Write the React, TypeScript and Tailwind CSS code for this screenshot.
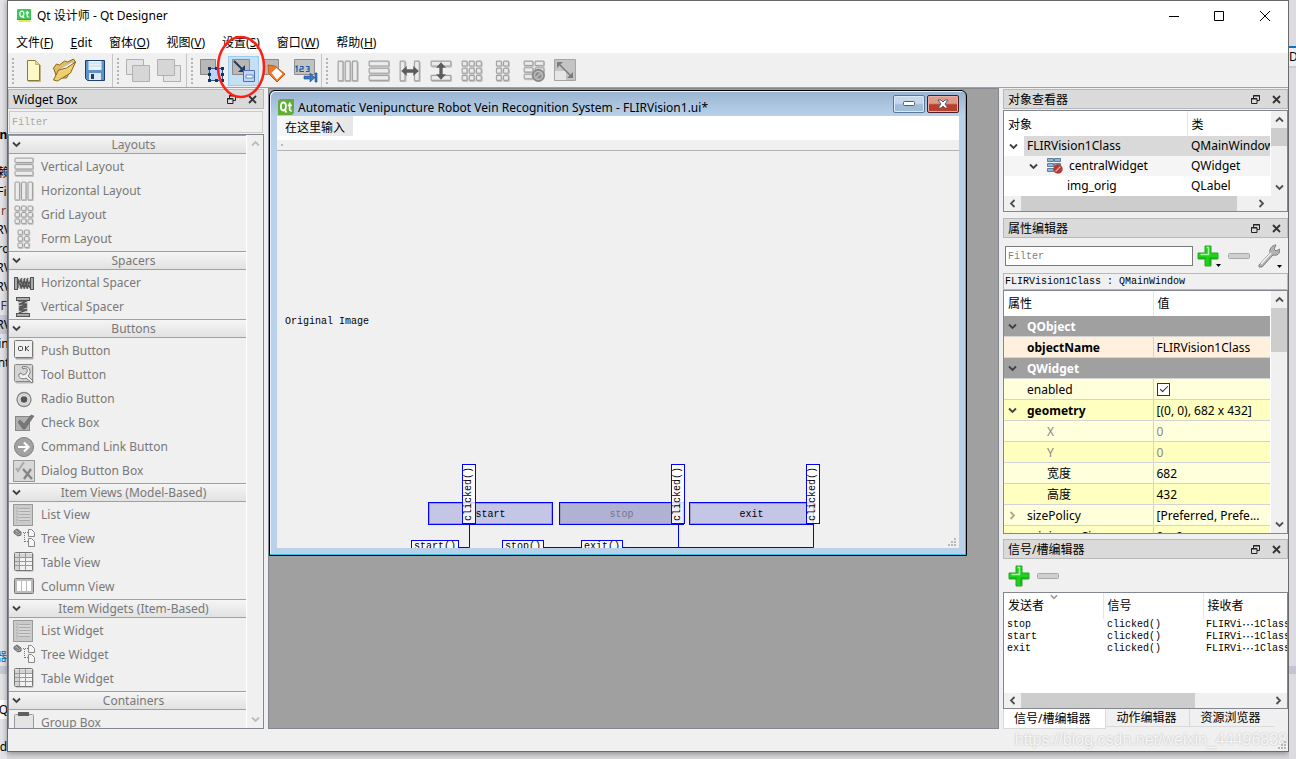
import React from 'react';
import { clsx } from 'clsx';

const UI = "font-['Noto_Sans','Noto_Sans_CJK_SC',sans-serif]";
const MONO = "font-['Liberation_Mono','Noto_Sans_CJK_SC',monospace]";

/* ---------- icons ---------- */

const rects: Record<string, number[][]> = {
  vertical: [[1, 1, 18, 4.5], [1, 7.5, 18, 4.5], [1, 14, 18, 4.5]],
  horizontal: [[1, 1, 4.5, 18], [7.5, 1, 4.5, 18], [14, 1, 4.5, 18]],
  grid: [1, 7.5, 14].flatMap((y) => [1, 7.5, 14].map((x) => [x, y, 4.5, 4.5])),
  form: [1, 7.5, 14].flatMap((y) => [4, 10.5].map((x) => [x, y, 4.5, 4.5])),
  hsplit: [[1, 1, 4.5, 18], [14, 1, 4.5, 18]],
  vsplit: [[1, 1, 18, 4.5], [1, 14, 18, 4.5]],
  broken: [[1, 1, 8, 4], [11, 1, 8, 4], [1, 7, 8, 4], [11, 7, 8, 4], [1, 13, 8, 4]],
};

const LayoutIcon = ({ kind, size = 20 }: { kind: string; size?: number }) => (
  <svg width={size} height={size} viewBox="0 0 20 20">
    {rects[kind].map(([x, y, w, h], i) => (
      <g key={i}>
        <rect x={x + 0.6} y={y + 0.8} width={w} height={h} rx="1" fill="none" stroke="#c4c4c4" strokeWidth="1.4" />
        <rect x={x} y={y} width={w} height={h} rx="0.8" fill="#dedede" stroke="#a2a2a2" />
        <rect x={x + 1} y={y + 1} width={w - 2} height={h - 2} fill="#ececec" />
      </g>
    ))}
    {kind === 'hsplit' && <path d="M2 10l5-4.500v3h6v-3l5 4.500-5 4.500v-3H7v3z" fill="#5c5c5c" />}
    {kind === 'vsplit' && <path d="M10 2l4.500 5h-3v6h3L10 18l-4.500-5h3V7h-3z" fill="#5c5c5c" />}
    {kind === 'broken' && (
      <g>
        <circle cx="14" cy="14" r="6" fill="#8a8a8a" />
        <circle cx="14" cy="14" r="3.600" fill="none" stroke="#bdbdbd" strokeWidth="1.400" />
        <path d="M11.600 16.400l4.800-4.800" stroke="#bdbdbd" strokeWidth="1.400" />
      </g>
    )}
  </svg>
);

const ItemIcon = ({ kind }: { kind: string }) => {
  if (rects[kind]) return <LayoutIcon kind={kind} />;
  return (
    <svg width="22" height="22" viewBox="0 0 22 22" fill="none">
      {kind === 'hspacer' && (
        <g stroke="#555">
          <path d="M4 6h14v11H4z" fill="#d4d4d4" stroke="none" />
          <path d="M5 16V7l3 9V7l3 9V7l3 9V7l3 9M5 12l4-6M8 17l4-11M11 17l4-11M14 17l4-10" strokeWidth="1.200" />
          <rect x="1.500" y="5.500" width="3" height="12" fill="#aaa" />
          <rect x="17.500" y="5.500" width="3" height="12" fill="#aaa" />
        </g>
      )}
      {kind === 'vspacer' && (
        <g stroke="#555">
          <path d="M5 5h10v12H5z" fill="#d4d4d4" stroke="none" />
          <path d="M5 5h9L6 8h8l-8 3h8l-8 3h8l-8 3M14 5l-8 4M14 9l-8 4M14 13l-8 4" strokeWidth="1.300" />
          <rect x="3.500" y="1.500" width="13" height="3" fill="#aaa" />
          <rect x="3.500" y="17.500" width="13" height="3" fill="#aaa" />
        </g>
      )}
      {kind === 'push' && (
        <g>
          <rect x="2.500" y="1.500" width="18" height="18" rx="1" fill="#aaa" />
          <rect x="1.500" y=".500" width="18" height="17" rx="1" fill="#f0f0f0" stroke="#777" />
          <rect x="5.500" y="6.500" width="4" height="4" rx="1" stroke="#444" />
          <path d="M12.500 6v5M16 6l-3 2.500L16 11" stroke="#444" />
        </g>
      )}
      {kind === 'tool' && (
        <g>
          <rect x="2.500" y="1.500" width="18" height="18" rx="1" fill="#bbb" />
          <rect x="1.500" y=".500" width="18" height="17" rx="1" fill="#d4d4d4" stroke="#888" />
          <path d="M9 3c5-2 9 2 8 6l-2 3 5 5-1 2-6-5c-4 2-8 0-7-4l2-1c1 3 5 2 6-1s-1-5-4-3z" fill="#f4f4f4" stroke="#777" />
        </g>
      )}
      {kind === 'radio' && (
        <g>
          <circle cx="11" cy="11.500" r="7" fill="#e6e6e6" stroke="#858585" strokeWidth="1.300" />
          <circle cx="11" cy="11.500" r="5" stroke="#c8c8c8" />
          <circle cx="11" cy="11.500" r="3.300" fill="#555" />
        </g>
      )}
      {kind === 'check' && (
        <g>
          <rect x="2.500" y="4.500" width="14" height="14" fill="#b0b0b0" stroke="#888" />
          <path d="M5 10l2-2 4 4 7-9 3 1-9 13h-2z" fill="#777" stroke="#666" strokeWidth=".600" />
        </g>
      )}
      {kind === 'command' && (
        <g>
          <circle cx="11" cy="11" r="9.500" fill="#a2a2a2" stroke="#808080" />
          <path d="M5 11h10M11 6.500l4.500 4.500-4.500 4.500" stroke="#fff" strokeWidth="2.200" />
        </g>
      )}
      {kind === 'dialog' && (
        <g>
          <rect x=".500" y=".500" width="21" height="21" fill="#d8d8d8" stroke="#999" />
          <path d="M3 8l2 3 6-9" stroke="#aaa" strokeWidth="2" />
          <path d="M10 9l9 10M18 9l-7 10" stroke="#858585" strokeWidth="2.400" />
        </g>
      )}
      {kind === 'list' && (
        <g>
          <rect x=".500" y=".500" width="19" height="21" fill="#cacaca" stroke="#999" />
          <path d="M6 4.500h11M6 7.500h11M6 10.500h11M6 13.500h11M6 16.500h11" stroke="#aaa" />
          <path d="M6 6h11M6 9h11M6 12h11M6 15h11" stroke="#e0e0e0" />
          <path d="M4 3v16" stroke="#aaa" strokeDasharray="2 1" />
        </g>
      )}
      {kind === 'tree' && (
        <g>
          <path d="M1 3l3-2 4 3v3l-3 1-4-3z" fill="#a8a8a8" stroke="#666" />
          <path d="M2 4l4 2M4 2l3 3" stroke="#666" strokeWidth=".800" />
          <path d="M10 4.500h5M11.500 5v9M12 13.500h3" stroke="#777" strokeDasharray="1 1" />
          <path d="M15.500 1.500h3l3 3v4h-6zM15.500 10.500h3l3 3v5h-6z" fill="#f5f5f5" stroke="#888" />
        </g>
      )}
      {kind === 'table' && (
        <g>
          <rect x="2.500" y="1.500" width="18" height="18" rx="1" fill="#aaa" />
          <rect x="1.500" y=".500" width="18" height="18" rx="1" fill="#f2f2f2" stroke="#777" />
          <path d="M2 1.500h17v4H2zM2 6h4v12H2z" fill="#d4d4d4" />
          <path d="M2 5.500h17M2 9.500h17M2 13.500h17M6.500 1v17M12.500 1v17" stroke="#999" />
        </g>
      )}
      {kind === 'column' && (
        <g>
          <rect x="1.500" y="2.500" width="19" height="15" rx="1" fill="#bbb" stroke="#777" />
          <rect x="4" y="5" width="4" height="10" fill="#fff" />
          <rect x="9" y="5" width="4" height="10" fill="#fff" />
          <rect x="14" y="5" width="4" height="10" fill="#fff" />
        </g>
      )}
      {kind === 'group' && (
        <g>
          <rect x="1.500" y="2.500" width="19" height="20" rx="1" fill="#e4e4e4" stroke="#999" />
          <rect x="5" y="0" width="11" height="4" fill="#606060" />
        </g>
      )}
    </svg>
  );
};

const QtLogo = ({ flat }: { flat?: boolean }) => (
  <svg width="16" height="16" viewBox="0 0 16 16">
    {flat ? (
      <path d="M2 0h14v14l-2 2H0V2z" fill="#62ac37" />
    ) : (
      <g>
        <path d="M2 1h13v10H1V2z" fill="#3fc65a" />
        <path d="M1 11h14v1H1z" fill="#2aa845" />
        <path d="M3 12h11l1 2H2z" fill="#f0e25c" />
      </g>
    )}
    {flat ? (
      <g fill="none" stroke="#fff" strokeWidth="1.800">
        <ellipse cx="5.400" cy="7.500" rx="2.500" ry="4" />
        <path d="M6 10l2.500 3.500M11.700 3.500v7q0 1.500 2 1.200M9.800 6.300h4" />
      </g>
    ) : (
      <g fill="none" stroke="#fff" strokeWidth="1.200">
        <ellipse cx="5.800" cy="6" rx="2" ry="2.800" />
        <path d="M6 7.500l2.200 2.700M11.200 3v5q0 1 1.600.800M9.700 4.800h3.300" />
      </g>
    )}
  </svg>
);

const ToolIcon = ({ kind }: { kind: string }) => {
  if (rects[kind]) return <LayoutIcon kind={kind} size={22} />;
  return (
    <svg width="25" height="25" viewBox="0 0 25 25" fill="none">
      {kind === 'new' && (
        <g>
          <path d="M7 23.500h12.500V7" stroke="#bdb68a" />
          <path d="M6.500 2.500h8l4 4v16h-12z" fill="#fdf8c8" stroke="#8a7a35" />
          <path d="M14.500 2.500v4h4" fill="#e5d98c" stroke="#b8a85a" strokeWidth=".800" />
        </g>
      )}
      {kind === 'open' && (
        <g stroke="#8a6914">
          <path d="M1.500 10l3-4 3 1 5-4 3 1 6-3 2 3-9 16H5z" fill="#e0bd62" />
          <path d="M6 12L20 4l2 1-11 13z" fill="#fff" stroke="#bbb" />
          <path d="M1.500 22l5-10 8-2 9-6-5 11-13 8z" fill="#efcf72" />
        </g>
      )}
      {kind === 'save' && (
        <g>
          <path d="M2.500 2.500h19v20h-17l-2-2z" fill="#5d93c8" stroke="#1c3f73" />
          <path d="M5.500 3h13v9h-13z" fill="#e8f2fb" />
          <path d="M6 5h12M6 8h12" stroke="#c5d6e6" />
          <path d="M6 15h12v7H6z" fill="#dfe8f0" />
          <path d="M8 16h3v5H8z" fill="#1d3d66" />
        </g>
      )}
      {kind === 'back' && (
        <g fill="#d6d6d6" stroke="#b0b0b0">
          <path d="M.500 1.500h17v15H.500z" fill="#e4e4e4" />
          <path d="M6.500 7.500h17v16h-17z" />
        </g>
      )}
      {kind === 'front' && (
        <g fill="#d6d6d6" stroke="#b0b0b0">
          <path d="M6.500 7.500h17v16h-17z" fill="#e4e4e4" />
          <path d="M.500 1.500h17v16H.500z" />
        </g>
      )}
      {kind === 'widgets' && (
        <g>
          <path d="M.500 1.500h15v15H.500z" fill="#b8b8b8" stroke="#888" />
          <path d="M9.500 10.500h13v12h-13z" fill="#b9d5ff" stroke="#33548a" />
          <path d="M8 9h3v3H8zM15 9h3v3h-3zM21 9h3v3h-3zM8 15h3v3H8zM21 15h3v3h-3zM8 21h3v3H8zM15 21h3v3h-3zM21 21h3v3h-3z" fill="#12355e" />
        </g>
      )}
      {kind === 'signals' && (
        <g>
          <path d="M1.500 1.500h17v15h-17z" fill="#b8b8b8" stroke="#8b8b8b" />
          <path d="M3 3l8 8" stroke="#203c5e" strokeWidth="2" />
          <path d="M14 14H7l7-7z" fill="#203c5e" />
          <path d="M12.500 12.500h11v11h-11z" fill="#bcd6ff" stroke="#5072a7" />
          <path d="M15 17h7v3h-7z" fill="#fff" stroke="#5072a7" strokeWidth=".800" />
        </g>
      )}
      {kind === 'buddies' && (
        <g>
          <path d="M1.500 1.500h15v15h-15z" fill="#b8b8b8" stroke="#8b8b8b" />
          <path d="M6 7l7 1 10 8-8 8-8-8z" fill="#f07a2c" stroke="#c45a16" />
          <path d="M9.500 15l5-5 6 6-5.500 5.500z" fill="#fff" />
        </g>
      )}
      {kind === 'taborder' && (
        <g>
          <path d="M1.500 1.500h20v15h-20z" fill="#c2c2c2" stroke="#909090" />
          <path d="M2.500 9l1.500-1v6M7 8.500h3v2.500H7v2.500h4M13 8.500h3v5h-3M14 11h2" stroke="#1d56a5" strokeWidth="1.200" />
          <path d="M11 18h6v-3l5 4.500-5 4.500v-3h-6zM22 15h2v9h-2z" fill="#3b78c4" stroke="#1b4a8c" strokeWidth=".600" />
        </g>
      )}
      {kind === 'adjust' && (
        <g>
          <path d="M2.500 1.500h21v21h-21z" fill="#c4c4c4" stroke="#a4a4a4" />
          <path d="M3 13h11v9H3z" fill="#e6e6e6" />
          <path d="M8 7l11 11" stroke="#7c7c7c" strokeWidth="1.500" />
          <path d="M5 4h6l-6 6zM21 20h-6l6-6z" fill="#7c7c7c" />
        </g>
      )}
    </svg>
  );
};

const Chevron = ({ dir = 'down', color = '#404040', size = 9 }: { dir?: string; color?: string; size?: number }) => {
  const paths: Record<string, string> = {
    down: 'M1 2.500l3.500 3.500 3.500-3.500',
    up: 'M1 6.500l3.500-3.500 3.500 3.500',
    left: 'M6.500 1L3 4.500l3.500 3.500',
    right: 'M2.500 1l3.500 3.500-3.500 3.500',
  };
  return (
    <svg width={size} height={size} viewBox="0 0 9 9" fill="none" className="shrink-0">
      <path d={paths[dir]} stroke={color} strokeWidth="1.800" />
    </svg>
  );
};

const Plus = () => (
  <svg width="22" height="22" viewBox="0 0 22 22">
    <path d="M8 1h6v7h7v6h-7v7H8v-7H1V8h7z" fill="#1fd01c" stroke="#2aa426" />
    <path d="M9.500 2.500h2v7h-8" fill="none" stroke="#a5f5a2" strokeWidth="1.500" />
    <path d="M9 13h-7M13 19.500V13h7" fill="none" stroke="#12a310" />
  </svg>
);

const Minus = () => (
  <svg width="22" height="22" viewBox="0 0 22 22">
    <rect x=".500" y="8.500" width="21" height="5" rx="1" fill="#cfcfcf" stroke="#a8a8a8" />
  </svg>
);

const DropArrow = () => (
  <svg width="5" height="3" viewBox="0 0 5 3" className="-ml-[3px] self-end"><path d="M0 0h5L2.500 3z" fill="#000" /></svg>
);

/* ---------- shared parts ---------- */

const DockTitle = ({ title }: { title: string }) => (
  <div className="flex h-5 shrink-0 items-center border border-[#b8b8b8] bg-[#dadada] pl-1 pr-[6px]">
    <h2 className="flex-1 pt-px leading-4">{title}</h2>
    <button aria-label="Float" className="mr-3">
      <svg width="9" height="9" viewBox="0 0 9 9" fill="none" stroke="#222"><path d="M2.500 3V.500h6v5H6M2 1h7" /><path d="M.500 3.500H6v5H.500zM0 4h6" /></svg>
    </button>
    <button aria-label="Close">
      <svg width="9" height="9" viewBox="0 0 9 9" stroke="#333" strokeWidth="1.800"><path d="M1 1l7 7M8 1L1 8" /></svg>
    </button>
  </div>
);

const VScroll = ({ thumb, faded }: { thumb?: string; faded?: boolean }) => (
  <div className="flex w-[17px] shrink-0 flex-col items-center border-l border-white bg-[#f0f0f0]">
    <div className="flex h-[17px] shrink-0 items-center"><Chevron dir="up" color={faded ? '#bdbdbd' : '#505050'} /></div>
    <div className="w-full flex-1">{thumb && <div className={clsx('w-full bg-[#cdcdcd]', thumb)} />}</div>
    <div className="flex h-[17px] shrink-0 items-center"><Chevron color={faded ? '#bdbdbd' : '#505050'} /></div>
  </div>
);

const HScroll = ({ thumb }: { thumb: string }) => (
  <div className="flex h-[15px] flex-1 items-center bg-[#f0f0f0]">
    <div className="flex w-[17px] justify-center"><Chevron dir="left" color="#505050" /></div>
    <div className="h-full flex-1"><div className={clsx('h-full bg-[#cdcdcd]', thumb)} /></div>
    <div className="flex w-[17px] justify-center"><Chevron dir="right" color="#505050" /></div>
  </div>
);

/* ---------- top area ---------- */

const menus = [['文件', 'F'], ['', 'Edit'], ['窗体', 'O'], ['视图', 'V'], ['设置', 'S'], ['窗口', 'W'], ['帮助', 'H']];

const TitleBar = () => (
  <header className="flex h-[30px] shrink-0 items-center bg-white pl-2">
    <QtLogo />
    <h1 className="ml-[5px] flex-1">Qt 设计师 - Qt Designer</h1>
    <button aria-label="Minimize" className="flex w-[45px] justify-center">
      <svg width="10" height="10" stroke="#000"><path d="M0 5.500h10" /></svg>
    </button>
    <button aria-label="Maximize" className="flex w-[46px] justify-center">
      <svg width="10" height="10" fill="none" stroke="#000"><path d="M.500.500h9v9h-9z" /></svg>
    </button>
    <button aria-label="Close window" className="flex w-[46px] justify-center">
      <svg width="10" height="10" stroke="#000"><path d="M0 0l10 10M10 0L0 10" /></svg>
    </button>
  </header>
);

const MenuBar = () => (
  <nav className="flex h-[23px] shrink-0 items-center border-b border-[#f0f0f0] bg-white pt-px">
    {menus.map(([name, key]) => (
      <button key={key} className="pl-2 pr-[9px] leading-4">
        {name ? <>{name}(<u>{key}</u>)</> : <><u>E</u>dit</>}
      </button>
    ))}
  </nav>
);

const toolGroups = [
  ['new', 'open', 'save'],
  ['back', 'front'],
  ['widgets', 'signals', 'buddies', 'taborder'],
  ['horizontal', 'vertical', 'hsplit', 'vsplit', 'grid', 'form', 'broken', 'adjust'],
];

const ToolBar = () => (
  <div className="flex h-[34px] shrink-0 items-center border-b border-[#a0a0a0] bg-[#f0f0f0]">
    {toolGroups.map((group, i) => (
      <React.Fragment key={i}>
        {i > 0 && <div className={clsx('h-full w-px bg-[#c4c4c4]', i < 3 && 'ml-px')} />}
        <div className="flex w-[10px] justify-center">
          <div className="h-[26px] w-0 border-l-2 border-dotted border-[#b4b4b4]" />
        </div>
        {group.map((kind) => (
          <button
            key={kind}
            aria-label={kind}
            className={clsx(
              'relative flex h-[30px] w-[31px] items-center justify-center',
              kind === 'signals' && 'border border-[#99cdf2] bg-[#c5e0f5]'
            )}
          >
            <ToolIcon kind={kind} />
            {kind === 'signals' && (
              <svg className="absolute -left-[13px] -top-[23px] z-10 max-w-none" width="50" height="68" fill="none">
                <ellipse cx="25" cy="33" rx="23" ry="30" stroke="#fb1f16" strokeWidth="2.500" />
              </svg>
            )}
          </button>
        ))}
      </React.Fragment>
    ))}
  </div>
);

/* ---------- widget box ---------- */

const categories: { name: string; items: [string, string][] }[] = [
  { name: 'Layouts', items: [['vertical', 'Vertical Layout'], ['horizontal', 'Horizontal Layout'], ['grid', 'Grid Layout'], ['form', 'Form Layout']] },
  { name: 'Spacers', items: [['hspacer', 'Horizontal Spacer'], ['vspacer', 'Vertical Spacer']] },
  {
    name: 'Buttons',
    items: [['push', 'Push Button'], ['tool', 'Tool Button'], ['radio', 'Radio Button'], ['check', 'Check Box'], ['command', 'Command Link Button'], ['dialog', 'Dialog Button Box']],
  },
  { name: 'Item Views (Model-Based)', items: [['list', 'List View'], ['tree', 'Tree View'], ['table', 'Table View'], ['column', 'Column View']] },
  { name: 'Item Widgets (Item-Based)', items: [['list', 'List Widget'], ['tree', 'Tree Widget'], ['table', 'Table Widget']] },
  { name: 'Containers', items: [['group', 'Group Box']] },
];

const WidgetBox = () => (
  <aside className="flex w-64 shrink-0 flex-col pt-px">
    <DockTitle title="Widget Box" />
    <input
      aria-label="Filter widgets"
      placeholder="Filter"
      className={clsx('mx-px mb-px mt-[2px] h-[22px] shrink-0 border border-[#cccccc] bg-[#f0f0f0] px-[2px] pt-px text-[10px] placeholder:text-[#a8a8a8]', MONO)}
    />
    <div className="flex min-h-0 flex-1 border border-[#828790] text-[#787878]">
      <div className="flex-1 overflow-hidden">
        {categories.map((cat) => (
          <section key={cat.name}>
            <button className="mb-px flex h-[19px] w-full items-center border-y border-[#a0a0a0] bg-linear-to-b from-[#f5f5f5] to-[#e2e2e2] pl-[3px]">
              <Chevron />
              <span className="flex-1 leading-4">{cat.name}</span>
            </button>
            <ul>
              {cat.items.map(([icon, label]) => (
                <li key={label} className="flex h-6 items-center">
                  <span className="flex w-8 justify-center pr-[2px]"><ItemIcon kind={icon} /></span>
                  {label}
                </li>
              ))}
            </ul>
          </section>
        ))}
      </div>
      <VScroll faded />
    </div>
  </aside>
);

/* ---------- form window ---------- */

const pushButtons = [
  { label: 'start', pos: 'left-[151px]', look: 'bg-[#c5c5e6] text-black' },
  { label: 'stop', pos: 'left-[282px]', look: 'bg-[#b1b1d3] text-[#77778f]' },
  { label: 'exit', pos: 'left-[412px]', look: 'bg-[#c5c5e6] text-black' },
];
const signalTags = ['left-[185px]', 'left-[394px]', 'left-[529px]'];
const slotTags = [
  { label: 'start()', pos: 'left-[134px] w-12' },
  { label: 'stop()', pos: 'left-[225px] w-[42px]' },
  { label: 'exit()', pos: 'left-[304px] w-[42px]' },
];

const FormCanvas = () => (
  <div className={clsx('relative flex-1 overflow-hidden bg-[#f0f0f0] text-[10px] leading-3', MONO)}>
    <span className="absolute left-2 top-[165px]">Original Image</span>
    {pushButtons.map((b) => (
      <button key={b.label} className={clsx('absolute top-[351px] h-[23px] w-[125px] border border-[#0000ff] pt-[3px] shadow-[inset_0_0_0_1px_#9c9cc0]', b.pos, b.look)}>
        {b.label}
      </button>
    ))}
    <svg className="absolute inset-0" width="682" height="397" fill="none" stroke="#0000ff">
      <path d="M192.500 373v23.500H182M401.500 373v23.500H267M536.500 373v23.500H346" />
    </svg>
    {signalTags.map((pos) => (
      <span key={pos} className={clsx('absolute top-[313px] flex h-[60px] w-[14px] rotate-180 items-center justify-center border border-[#0000ff] bg-white/80 [writing-mode:vertical-rl]', pos)}>
        clicked()
      </span>
    ))}
    {slotTags.map((s) => (
      <span key={s.label} className={clsx('absolute top-[389px] h-[14px] border border-[#0000ff] bg-[#f8f8f8] text-center', s.pos)}>{s.label}</span>
    ))}
    <svg className="absolute bottom-[1px] right-[2px]" width="9" height="9" fill="#b8b8b8">
      <path d="M6 0h2v2H6zM3 3h2v2H3zM6 3h2v2H6zM0 6h2v2H0zM3 6h2v2H3zM6 6h2v2H6z" />
    </svg>
  </div>
);

const FormWindow = () => (
  <div className="mt-px flex h-[466px] w-[698px] flex-col rounded-t-md border border-black bg-linear-to-b from-[#99b4d1] to-[#b9d1ea] to-[25px] px-[7px] pb-[7px] shadow-[inset_-1px_-1px_0_#2fc4ea,inset_1px_1px_0_#e8f3fd]">
    <div className="flex h-[25px] shrink-0 items-center">
      <div className="ml-px pt-[6px]"><QtLogo flat /></div>
      <h2 className="ml-1 flex-1 pt-2 leading-4">Automatic Venipuncture Robot Vein Recognition System - FLIRVision1.ui*</h2>
      <button aria-label="Minimize form" className="mr-[2px] flex h-[18px] w-8 items-center justify-center rounded-[2px] border border-[#5c7895] bg-linear-to-b from-[#c6d8ea] from-45% to-[#a2bdd8] to-55% shadow-[inset_0_0_0_1px_#dbe9f6]">
        <svg width="12" height="6"><rect x=".500" y=".500" width="11" height="4" rx="1" fill="#fff" stroke="#555b68" /></svg>
      </button>
      <button aria-label="Close form" className="flex h-[18px] w-8 items-center justify-center rounded-[2px] border border-[#4c1d22] bg-linear-to-b from-[#dd9a8e] from-45% to-[#bb402c] to-55% shadow-[inset_0_0_0_1px_#e8b0a5]">
        <svg width="12" height="10" viewBox="0 0 12 10"><path d="M1 1h3l2 2 2-2h3L8 5l3 4H8L6 7 4 9H1l3-4z" fill="#fff" stroke="#555b68" /></svg>
      </button>
    </div>
    <div className="flex h-6 shrink-0 items-start bg-white">
      <button className="h-5 bg-linear-to-r from-[#f8f8f8] to-[#e6e6e6] px-2 pt-[3px] leading-4">在这里输入</button>
    </div>
    <div className="h-[11px] shrink-0 border-b border-[#b4b4b4] bg-[#f0f0f0] pl-1 pt-1"><div className="size-[2px] bg-[#bbb]" /></div>
    <FormCanvas />
  </div>
);

/* ---------- right docks ---------- */

const ObjectInspector = () => (
  <section className="flex shrink-0 flex-col">
    <DockTitle title="对象查看器" />
    <div className="mt-px border border-[#828790] bg-white">
      <div className="flex">
        <div className="min-w-0 flex-1 overflow-hidden">
          <table className="w-full table-fixed text-left">
            <thead>
              <tr className="h-[25px]">
                <th className="w-[183px] border-r border-[#e5e5e5] pl-1 pt-[2px] font-normal">对象</th>
                <th className="pl-1 pt-[2px] font-normal">类</th>
              </tr>
            </thead>
            <tbody className="whitespace-nowrap">
              <tr className="h-5">
                <td className="p-0">
                  <div className="flex h-5 items-center pl-[5px]"><Chevron /><span className="ml-[6px] h-full flex-1 bg-[#d9d9d9] pl-[3px] leading-5">FLIRVision1Class</span></div>
                </td>
                <td className="overflow-hidden bg-[#d9d9d9] p-0 pl-1">QMainWindow</td>
              </tr>
              <tr className="h-5 bg-[#f5f5f5]">
                <td className="p-0">
                  <div className="flex h-5 items-center pl-[25px]">
                    <Chevron />
                    <svg className="ml-[9px] mr-[6px]" width="16" height="16" viewBox="0 0 16 16">
                      <path d="M.500.500h6v3h-6zM7.500.500h6v3h-6zM.500 5.500h6v3h-6zM7.500 5.500h6v3h-6zM.500 10.500h6v3h-6z" fill="#8fb8d8" stroke="#5d7f9d" />
                      <circle cx="11" cy="11" r="4.700" fill="#b03a35" />
                      <path d="M8.500 13.500l5-5" stroke="#e69a94" strokeWidth="1.500" />
                    </svg>
                    centralWidget
                  </div>
                </td>
                <td className="p-0 pl-1">QWidget</td>
              </tr>
              <tr className="h-5"><td className="p-0 pl-[63px]">img_orig</td><td className="p-0 pl-1">QLabel</td></tr>
            </tbody>
          </table>
        </div>
        <VScroll thumb="h-[18px]" />
      </div>
      <div className="flex bg-[#f0f0f0]"><HScroll thumb="w-[93%]" /><div className="w-[17px]" /></div>
    </div>
  </section>
);

type Prop = { name: string; value?: string; kind?: string; arrow?: string; look: string };
const props: Prop[] = [
  { name: 'QObject', kind: 'group', look: 'bg-[#a0a0a0] text-white font-bold' },
  { name: 'objectName', value: 'FLIRVision1Class', kind: 'bold', look: 'bg-[#fff0de]' },
  { name: 'QWidget', kind: 'group', look: 'bg-[#a0a0a0] text-white font-bold' },
  { name: 'enabled', kind: 'check', look: 'bg-[#ffffdc]' },
  { name: 'geometry', value: '[(0, 0), 682 x 432]', kind: 'bold', arrow: 'down', look: 'bg-[#ffffbf]' },
  { name: 'X', value: '0', kind: 'sub', look: 'bg-[#ffffdc] text-[#888]' },
  { name: 'Y', value: '0', kind: 'sub', look: 'bg-[#ffffbf] text-[#888]' },
  { name: '宽度', value: '682', kind: 'sub', look: 'bg-[#ffffdc]' },
  { name: '高度', value: '432', kind: 'sub', look: 'bg-[#ffffbf]' },
  { name: 'sizePolicy', value: '[Preferred, Prefe...', arrow: 'right', look: 'bg-[#ffffdc]' },
  { name: 'minimumSize', value: '0 x 0', arrow: 'right', look: 'bg-[#ffffbf]' },
];

const PropertyEditor = () => (
  <section className="mt-[6px] flex shrink-0 flex-col">
    <DockTitle title="属性编辑器" />
    <div className="flex h-[35px] items-center pl-[2px] pr-[6px]">
      <input aria-label="Filter properties" placeholder="Filter" className={clsx('h-5 min-w-0 flex-1 border border-[#7a7a7a] bg-white px-[2px] pt-px text-[10px] placeholder:text-[#808080]', MONO)} />
      <button aria-label="Add property" className="ml-1 flex"><Plus /><DropArrow /></button>
      <button aria-label="Remove property" className="ml-[7px]"><Minus /></button>
      <button aria-label="Configure" className="ml-2 flex">
        <svg width="22" height="24" viewBox="0 0 22 24">
          <path d="M1 21L12 9c-1-4 2-8 6-8l-2 4 2 2 4-2c0 5-3 7-7 6L4 23H1z" fill="#b4b4b4" stroke="#7d7d7d" />
          <path d="M3 20l10-11" stroke="#f4f4f4" strokeWidth="1.500" />
        </svg>
        <DropArrow />
      </button>
    </div>
    <div className={clsx('h-[17px] border border-[#b8b8b8] pl-px text-[10px] leading-4', MONO)}>FLIRVision1Class : QMainWindow</div>
    <div className="flex h-[244px] border border-[#828790] bg-white">
      <div className="min-w-0 flex-1 overflow-hidden">
        <table className="w-full table-fixed text-left">
          <thead>
            <tr className="h-[25px]"><th className="w-[149px] border-r border-[#e5e5e5] pl-1 font-normal">属性</th><th className="pl-1 font-normal">值</th></tr>
          </thead>
          <tbody className="whitespace-nowrap">
            {props.map((p) => (
              <tr key={p.name} className={clsx('border-b border-[#d4d4d4]', p.look)}>
                <td colSpan={p.kind === 'group' ? 2 : 1} className={clsx('p-0', p.kind !== 'group' && 'border-r border-[#d4d4d4]')}>
                  <div className={clsx('flex h-5 items-center pt-px', p.kind === 'bold' && 'font-bold')}>
                    <span className="flex w-[23px] pl-1">
                      {(p.kind === 'group' || p.arrow) && <Chevron dir={p.arrow || 'down'} color={p.arrow === 'right' ? '#a9a98a' : '#404040'} />}
                    </span>
                    <span className={clsx(p.kind === 'sub' && 'pl-5')}>{p.name}</span>
                  </div>
                </td>
                {p.kind !== 'group' && (
                  <td className="overflow-hidden p-0 pl-[3px] pt-px">
                    {p.kind === 'check' ? (
                      <input type="checkbox" defaultChecked aria-label={p.name} className="relative block size-[13px] appearance-none border border-[#333] bg-white after:absolute after:left-[4px] after:top-0 after:hidden after:h-2 after:w-1 after:rotate-45 after:border-b after:border-r after:border-[#222] after:content-[''] checked:after:block" />
                    ) : p.value}
                  </td>
                )}
              </tr>
            ))}
          </tbody>
        </table>
      </div>
      <VScroll thumb="h-[44px]" />
    </div>
  </section>
);

const SignalEditor = () => (
  <section className="mt-[5px] flex min-h-0 flex-1 flex-col">
    <DockTitle title="信号/槽编辑器" />
    <div className="flex h-[33px] shrink-0 items-center gap-[7px] pl-[5px]">
      <button aria-label="Add connection"><Plus /></button>
      <button aria-label="Remove connection"><Minus /></button>
    </div>
    <div className="relative flex min-h-0 flex-1 flex-col border border-[#828790] bg-white">
      <div className="absolute left-[46px] top-0"><Chevron color="#999" size={8} /></div>
      <div className="flex-1 overflow-hidden">
        <table className="w-full table-fixed whitespace-nowrap text-left">
          <thead>
            <tr className="h-[26px]">
              <th className="w-[99px] border-r border-[#e5e5e5] pl-1 font-normal">发送者</th>
              <th className="w-[100px] border-r border-[#e5e5e5] pl-1 font-normal">信号</th>
              <th className="pl-1 font-normal">接收者</th>
            </tr>
          </thead>
          <tbody className={clsx('text-[10px] leading-3', MONO)}>
            {['stop', 'start', 'exit'].map((sender) => (
              <tr key={sender} className="h-3">
                <td className="p-0 pl-[3px]">{sender}</td>
                <td className="p-0 pl-1">clicked()</td>
                <td className="overflow-hidden p-0 pl-[3px]">
                  <div className="flex h-3">FLIRVi<span className="font-['Noto_Sans_CJK_SC',sans-serif] text-[12px]">⋯</span>1Class</div>
                </td>
              </tr>
            ))}
          </tbody>
        </table>
      </div>
      <div className="flex"><HScroll thumb="w-[70%]" /></div>
    </div>
    <div role="tablist" className="flex h-5 shrink-0 items-start">
      <button role="tab" aria-selected="true" className="h-5 border border-t-0 border-[#d9d9d9] bg-white pl-[10px] pr-[15px] leading-5">信号/槽编辑器</button>
      <button role="tab" aria-selected="false" className="h-[18px] border-b border-r border-[#d9d9d9] pl-[10px] pr-[13px] leading-[18px]">动作编辑器</button>
      <button role="tab" aria-selected="false" className="h-[18px] border-b border-[#d9d9d9] pl-[10px] pr-[13px] leading-[18px]">资源浏览器</button>
    </div>
  </section>
);

/* ---------- window behind ---------- */

const behind = [
  ['font-bold', 'n'], ['', ''], ['', '赖'], ['', 'Fil'], ['text-[#7a3b20]', 'r'], ['', 'RV'], ['', 'ro'], ['', 'RV'],
  ['', 'RV'], ['text-[#4a2c10]', 'F'], ['bg-[#c9cad8]', 'RV'], ['', 'in'], ['', 'nt'],
];

export default function App() {
  return (
    <div className={clsx('flex h-screen w-full overflow-hidden bg-[#d6d6d8] text-[12px] leading-4 text-black', UI)}>
      <div className="flex w-[7px] shrink-0 flex-col overflow-hidden bg-[#e4e4e8] pt-[125px]">
        {behind.map(([cls, text], i) => (
          <div key={i} className={clsx('flex h-[19px] shrink-0 items-center justify-center', cls)}>{text}</div>
        ))}
        <div className="mt-[275px] flex h-[19px] shrink-0 items-center justify-end text-[#0e70c0]">器</div>
        <div className="h-2 shrink-0 bg-[#c9cad8]" />
        <div className="mt-[26px] flex h-[19px] shrink-0 items-center justify-center bg-white">Q</div>
        <div className="mt-[18px] flex h-[19px] shrink-0 items-center justify-center">d</div>
      </div>

      <div className="flex min-w-0 flex-1 flex-col pb-[7px]">
        <div className="flex min-h-0 flex-1 flex-col border border-[#696969] bg-[#f0f0f0] shadow-[0_1px_6px_rgba(0,0,0,0.4)]">
          <TitleBar />
          <MenuBar />
          <ToolBar />
          <div className="flex min-h-0 flex-1">
            <WidgetBox />
            <main className="ml-1 mr-1 min-w-0 flex-1 overflow-hidden border border-[#828790] bg-[#a0a0a0]">
              <FormWindow />
            </main>
            <aside className="flex w-[285px] shrink-0 flex-col pt-px">
              <ObjectInspector />
              <PropertyEditor />
              <SignalEditor />
            </aside>
          </div>
          <footer className="relative flex h-[22px] shrink-0 items-center justify-end overflow-hidden pr-px font-['Liberation_Sans',sans-serif] text-[16px] text-[#f6f6f6] [text-shadow:0_0_2px_#b4b4b4]">
            https://blog.csdn.net/weixin_44496838
            <svg className="absolute bottom-[1px] right-[1px]" width="9" height="9" fill="#b8b8b8">
              <path d="M6 0h2v2H6zM3 3h2v2H3zM6 3h2v2H6zM0 6h2v2H0zM3 6h2v2H3zM6 6h2v2H6z" />
            </svg>
          </footer>
        </div>
      </div>

      <div className="flex w-[7px] shrink-0 flex-col overflow-hidden bg-[#dcdce0] pt-[46px]">
        <div className="h-[2px] shrink-0 bg-[#0e70c0]" />
        <div className="flex h-5 shrink-0 items-center border-b-2 border-[#c9cad8] bg-[#eeeef2]">De</div>
        <div className="mt-[598px] h-2 shrink-0 bg-[#c3c4d6]" />
      </div>
    </div>
  );
}
